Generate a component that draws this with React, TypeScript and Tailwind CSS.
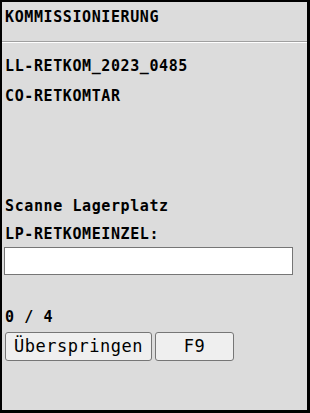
import React from 'react';

const mono = { fontFamily: '"DejaVu Sans Mono", monospace' };

export default function App() {
  return (
    <div
      className="w-[310px] h-[413px] bg-[#dcdcdc] border-l-2 border-t-2 border-r-[3px] border-b-[3px] border-black text-black flex flex-col"
      style={mono}
    >
      {/* Header */}
      <div className="h-[30px] pl-[3px] pt-[7px] text-[15px] leading-[16px] font-bold tracking-[0.6px]">
        KOMMISSIONIERUNG
      </div>
      <div className="mt-[9px] h-[2px] border-t border-[#a0a0a0] border-b border-b-white" />

      {/* Order info */}
      <div className="pl-[3px] pt-[8px] text-[15px] leading-[30px] font-bold tracking-[0.6px]">
        <div className="h-[30px]">LL-RETKOM_2023_0485</div>
        <div className="h-[30px]">CO-RETKOMTAR</div>
      </div>

      {/* Scan section */}
      <div className="pl-[3px] mt-[81px] text-[15px] leading-[28px] font-bold tracking-[0.6px]">
        <div className="h-[28px]">Scanne Lagerplatz</div>
        <div className="h-[28px]">LP-RETKOMEINZEL:</div>
      </div>
      <div className="pl-[2px] -mt-[1px]">
        <input
          type="text"
          className="w-[289px] h-[28px] bg-white border border-[#767676] outline-none"
        />
      </div>

      {/* Progress */}
      <div className="pl-[3px] mt-[34px] text-[15px] leading-[16px] font-bold tracking-[0.6px]">
        0 / 4
      </div>
      <div className="pl-[3px] mt-[7px] flex gap-[3px]">
        <button className="h-[29px] w-[147px] bg-[#efefef] border border-[#767676] rounded-[3px] text-[17px] tracking-[0.5px]">
          Überspringen
        </button>
        <button className="h-[29px] w-[79px] bg-[#efefef] border border-[#767676] rounded-[3px] text-[17px] tracking-[0.5px]">
          F9
        </button>
      </div>
    </div>
  );
}
